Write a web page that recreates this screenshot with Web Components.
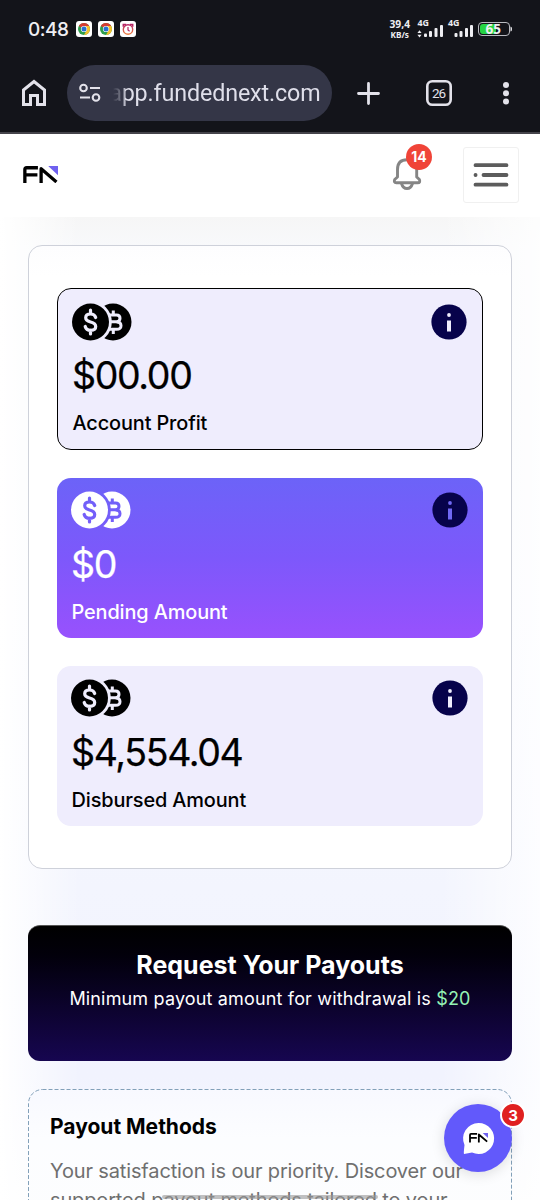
<!DOCTYPE html>
<html lang="en">
<head>
<meta charset="utf-8">
<title>Payouts</title>
<style>
html,body{margin:0;height:1200px;overflow:hidden}
body{font-family:Inter,"Liberation Sans",sans-serif;color:#000;background:#fff}
</style>
</head>
<body>
<payout-app></payout-app>
<script>
const define=(name,html)=>customElements.define(name,class extends HTMLElement{
  constructor(){super();const t=document.createElement('template');t.innerHTML=html;
    this.attachShadow({mode:'open'}).appendChild(t.content.cloneNode(true));}
});

define('chrome-icon',`<style>:host{display:block;width:16px;height:16px}svg{display:block}</style>
<svg width="16" height="16" viewBox="0 0 16 16"><rect width="16" height="16" rx="3" fill="#fff"/>
<circle cx="8" cy="8" r="6" fill="#2f9e4c"/><path d="M8 8L2.8 5A6 6 0 0 1 13.2 5z" fill="#d63c31"/><path d="M8 5H13.2A6 6 0 0 1 8 14L10.6 9.5z" fill="#f6c12c"/>
<circle cx="8" cy="8" r="3.1" fill="#fff"/><circle cx="8" cy="8" r="2.5" fill="#2970cf"/></svg>`);

define('alarm-icon',`<style>:host{display:block;width:16px;height:16px}svg{display:block}</style>
<svg width="16" height="16" viewBox="0 0 16 16"><defs><linearGradient id="g" x2="0" y2="1"><stop stop-color="#b52464"/><stop offset="1" stop-color="#f08040"/></linearGradient></defs><rect width="16" height="16" rx="3" fill="#fff"/>
<path d="M3.4 5.8V3.5h2.8M9.8 3.5h2.8v2.3" fill="none" stroke="#b52464" stroke-width="1.7"/><circle cx="8" cy="8.5" r="4.7" fill="none" stroke="url(#g)" stroke-width="1.4"/><path d="M8 6v3l1.6 1.2" fill="none" stroke="#b52464" stroke-width="1.2"/></svg>`);

define('status-bar',`<style>
:host{display:flex;height:58px;align-items:center;padding:0 28px;box-sizing:border-box;color:#eeeef2;font-family:"Noto Sans",sans-serif}
.time{font-size:19px;font-weight:500;letter-spacing:-.5px;width:48px;line-height:22px;font-family:Inter,sans-serif;padding-top:1px}
.apps{display:flex;gap:6px}
.right{margin-left:auto;display:flex;align-items:flex-start;height:24px}
svg{display:block}
</style>
<div class="time">0:48</div><div class="apps"><chrome-icon></chrome-icon><chrome-icon></chrome-icon><alarm-icon></alarm-icon></div>
<div class="right">
<svg width="126" height="24" viewBox="386 17 126 24" fill="#eeeef2" font-family="Noto Sans,sans-serif" font-weight="700">
<text x="389.500" y="27.500" font-size="10" textLength="20.500" lengthAdjust="spacingAndGlyphs">39,4</text><text x="390.500" y="37.700" font-size="8.800" textLength="18.500" lengthAdjust="spacingAndGlyphs">KB/s</text>
<text x="417.500" y="26.300" font-size="8.500" textLength="11.500" lengthAdjust="spacingAndGlyphs">4G</text><text x="447.900" y="26.300" font-size="8.500" textLength="11.500" lengthAdjust="spacingAndGlyphs">4G</text>
<path d="M417.400 33l2.100-2.700 2.100 2.700zM417.400 34.800h4.200l-2.100 2.600z"/>
<g><rect x="424" y="33.500" width="3" height="3.500" rx="1"/><rect x="429" y="31" width="3" height="6" rx="1"/><rect x="434.500" y="28" width="3" height="9" rx="1"/><rect x="440" y="25" width="3" height="12" rx="1"/></g>
<g><rect x="454.500" y="33" width="3" height="4" rx="1"/><rect x="459.500" y="31" width="3" height="6" rx="1"/><rect x="465" y="28" width="3" height="9" rx="1"/><rect x="470" y="25" width="3" height="12" rx="1"/></g>
<rect x="478.500" y="22.500" width="31" height="13" rx="3.5" fill="none" stroke="#b9bac0"/><path d="M483 24h13v10h-13q-3 0-3-3v-4q0-3 3-3z" fill="#25d443"/><path d="M510.500 26.500q1.500 0 1.500 2.500t-1.500 2.500z"/>
<text x="485.500" y="33.800" font-size="13.500" textLength="15.500" lengthAdjust="spacingAndGlyphs">65</text></svg></div>`);

define('browser-bar',`<style>
:host{display:flex;height:76px;box-sizing:border-box;border-bottom:2px solid #45444b;align-items:flex-start;padding:7px 0 0 21px;color:#e3e2ea;font-family:Roboto,sans-serif}
svg{display:block}
.home{width:46px;padding-top:13px}
.url{display:flex;align-items:center;width:265px;height:56px;border-radius:28px;background:#343647;box-sizing:border-box;padding-left:12px;overflow:hidden}
.host{flex:none;display:flex;justify-content:flex-end;margin-left:9px;width:210.500px;font-size:23.300px;line-height:30px;letter-spacing:-.14px;white-space:nowrap;color:#dfdfea;-webkit-mask:linear-gradient(90deg,#0000 3px,#0008 14px,#000 15px);mask:linear-gradient(90deg,#0000 3px,#0008 14px,#000 15px)}
</style>
<div class="home"><svg width="26" height="30" viewBox="0 0 26 30"><path d="M2.500 12L13 3.500 23.500 12V26.500h-7V17.500h-7v9h-7z" fill="none" stroke="currentColor" stroke-width="3"/></svg></div>
<div class="url"><svg width="22" height="20" viewBox="0 0 22 20" fill="none" stroke="currentColor" stroke-width="2.100"><circle cx="4.500" cy="5" r="3.300"/><path d="M11 5h10M1 14.500h10"/><circle cx="17" cy="14.500" r="3.300"/></svg><span class="host">app.fundednext.com</span></div>
<svg width="208" height="56" viewBox="332 65 208 56"><path d="M368.500 83.500v20M358.500 93.500h20" stroke="currentColor" stroke-width="2.800" stroke-linecap="round"/><rect x="427.300" y="81.300" width="23.400" height="23.400" rx="5" fill="none" stroke="currentColor" stroke-width="2.600"/><text x="439" y="98" text-anchor="middle" font-size="13.500" fill="currentColor" textLength="14">26</text><g fill="currentColor"><circle cx="506" cy="85" r="3"/><circle cx="506" cy="93.300" r="3"/><circle cx="506" cy="101.500" r="3"/></g></svg>`);

define('fn-logo',`<style>:host{display:block}svg{display:block;width:100%}</style>
<svg viewBox="0 0 34 17"><path d="M1.800 17V3.500Q1.800 1.700 3.600 1.700H14.500M2 8.600H14M17.600 17V2.600L32.500 15.500" fill="none" stroke="#000" stroke-width="3.200" stroke-linejoin="round"/><path d="M24.500 0H34V9z" fill="#6f61ef"/></svg>`);

define('count-badge',`<style>:host{display:flex;align-items:center;justify-content:center;border-radius:50%;color:#fff;font-weight:700;box-sizing:border-box}</style><slot></slot>`);

define('site-header',`<style>
:host{display:flex;align-items:flex-start;height:83px;box-sizing:border-box;background:#fff;padding:13px 21px 0 23px}
fn-logo{width:35px;margin-top:18.500px}
.bell{position:relative;margin-left:auto;width:30px;height:34px;margin-top:9px}
.bell count-badge{position:absolute;left:14px;top:-12.500px;width:26px;height:26px;background:#f04438;font-size:14px}
svg{display:block}
.menu{margin-left:41px;width:56px;height:56px;box-sizing:border-box;border:1px solid #f0f0f0;border-radius:3px;display:grid;place-items:center}
.menu svg{margin-top:-1px}
</style><fn-logo></fn-logo>
<div class="bell"><svg width="30" height="34" viewBox="0 0 30 34" fill="none" stroke="#858585" stroke-width="2.900" stroke-linejoin="round"><path d="M5.500 21V13.500C5.500 7 9 3.700 15 3.700s9.700 3.300 9.700 9.800V21l2.700 2.500q1.200 3.300-1.700 3.300H4.300Q1.500 26.800 2.700 23.500z"/><path d="M9.500 27.500q1.500 5 5.500 5t5.500-5"/></svg><count-badge>14</count-badge></div>
<div class="menu"><svg width="36" height="26" viewBox="0 0 36 26" stroke="#5c5c5c" stroke-width="3.800" stroke-linecap="round"><path d="M2.500 3.200h31M10.500 13h23M2.500 13h.1M2.500 22.700h31"/></svg></div>`);

define('coin-pair',`<style>:host{display:block;width:60px;height:38px}svg{display:block}</style>
<svg width="60" height="38" viewBox="0 0 60 38"><defs><mask id="a" maskUnits="userSpaceOnUse" x="0" y="0" width="60" height="38"><circle cx="41" cy="19" r="18.500" fill="#fff"/><circle cx="18.500" cy="19" r="21.300" fill="#000"/><path d="M37 12h7.500q3.500 0 3.500 3.300t-3.500 3.500H37M44.500 19q4.500 0 4.500 3.700t-4.500 3.600H37M41.300 7.500V12M41.300 26v5" fill="none" stroke="#000" stroke-width="3"/></mask>
<mask id="b" maskUnits="userSpaceOnUse" x="0" y="0" width="60" height="38"><circle cx="18.500" cy="19" r="18.500" fill="#fff"/><path d="M23.700 14.500Q22.800 11 18.500 11Q13.700 11 13.700 14.800Q13.700 17.700 18.500 19Q23.700 20.300 23.700 23.500Q23.700 27.300 18.700 27.300Q14.200 27.300 13.200 23.500M18.500 7v4M18.500 27v4" fill="none" stroke="#000" stroke-width="3.200" stroke-linecap="round"/></mask></defs>
<rect width="60" height="38" fill="currentColor" mask="url(#a)"/><rect width="60" height="38" fill="currentColor" mask="url(#b)"/></svg>`);

define('info-dot',`<style>:host{display:block;width:36px;height:36px}svg{display:block}</style>
<svg width="36" height="36" viewBox="0 0 36 36"><circle cx="18" cy="18" r="17.600" fill="#07034b"/><circle cx="18" cy="11" r="1.900" fill="var(--info,#efedfd)"/><path d="M16 16.500h4v11h-4z" fill="var(--info,#efedfd)"/></svg>`);

define('stat-card',`<style>
:host{display:block;height:160px;box-sizing:border-box;border-radius:14px;background:#efedfd;padding:13px 15px 13px 14px;color:#000}
:host([outlined]){height:162px;border:1px solid #000;padding:14px 15px 13px 14px}
:host([outlined]) .amount{margin-top:12px}
:host([outlined]) .label{margin-top:12px}
:host([accent]){color:#fff;background:linear-gradient(#6c63f8,#7d58fb 50%,#9851fd);--info:#7068f4}
.top{display:flex;justify-content:space-between}
info-dot{margin-top:1px}
.amount{font-size:37.500px;line-height:46px;margin-top:13px;letter-spacing:-1.350px;-webkit-text-stroke:.25px currentColor}
.label{font-size:19.900px;line-height:24px;margin-top:12px;font-weight:500;letter-spacing:-.12px;padding-left:.5px}
</style><div class="top"><coin-pair></coin-pair><info-dot></info-dot></div><div class="amount"><slot name="amount"></slot></div><div class="label"><slot></slot></div>`);

define('stats-panel',`<style>:host{display:flex;flex-direction:column;gap:28px;box-sizing:border-box;height:624px;padding:42px 28px;border:1px solid #ced1da;border-radius:14px;background:linear-gradient(#fdfdfe,#fff 30px)}</style><slot></slot>`);

define('payout-banner',`<style>
:host{display:block;height:136px;box-sizing:border-box;border-radius:12px;background:linear-gradient(#000,#02000b 22%,#10043a 75%,#160650);color:#fff;text-align:center;padding-top:24px;border-top:1px solid #555}
h2{margin:0;font-size:25px;line-height:30px;font-weight:700}
p{margin:6px 0 0;font-size:18px;line-height:26px;letter-spacing:.16px}
b{font-weight:400;color:#95f3b5}
</style><h2>Request Your Payouts</h2><p>Minimum payout amount for withdrawal is <b>$20</b></p>`);

define('payout-methods',`<style>
:host{display:block;position:relative;height:200px;box-sizing:border-box;padding:24px 22px;border-radius:14px;background:linear-gradient(#f8f9ff,#fcfdff 50px,#fdfdfd)}
.frame{position:absolute;inset:0;width:100%;height:100%}
h3{margin:0;font-size:21px;line-height:28px;font-weight:700}
p{margin:16px 0 0;font-size:20px;line-height:29px;letter-spacing:-.14px;color:#6f6f6f;white-space:nowrap}
</style><svg class="frame"><rect x=".5" y=".5" width="483" height="220" rx="14" fill="none" stroke="#82a0b9" stroke-dasharray="4 2"/></svg><h3>Payout Methods</h3><p>Your satisfaction is our priority. Discover our<br>supported payout methods tailored to your</p>`);

define('chat-button',`<style>
:host{display:grid;place-items:center;width:68px;height:68px;border-radius:50%;background:#6259fb;box-shadow:0 2px 14px #0002}
.bubble{position:relative;width:31px;height:31px}
.bubble>svg{display:block;overflow:visible}
fn-logo{position:absolute;left:6px;top:10.500px;width:19px}
count-badge{position:absolute;left:56px;top:-2px;width:26px;height:26px;border:2px solid #fff;background:#e02020;font-size:15px}
</style><div class="bubble"><svg width="31" height="31" viewBox="0 0 31 31"><path d="M15.500 0a15.500 15.500 0 1 1-6.500 29.500L1 31Q.5 30.500 1.500 22A15.500 15.500 0 0 1 15.500 0z" fill="#fff"/></svg><fn-logo></fn-logo></div><count-badge>3</count-badge>`);

define('payout-app',`<style>
:host{display:flex;flex-direction:column;position:relative;width:540px;height:1200px;overflow:hidden}
.chrome{background:#13141a;height:134px;flex:none}
main{display:flex;flex-direction:column;padding:28px 28px 0;height:983px;box-sizing:border-box;background:linear-gradient(90deg,#fff,#fff0 80px,#fff0 440px,#ffffffd0),linear-gradient(#f6f6f6,#f8f9fb 30px,#f8f9fe 400px,#f3f5fe 670px,#f1f3fe 860px,#fbfbfd)}
payout-banner{margin-top:56px}payout-methods{margin-top:28px}
stats-panel,payout-banner,payout-methods,site-header{flex:none}
chat-button{position:absolute;left:444px;top:1104px}
.bar{position:absolute;left:162px;top:1195px;width:216px;height:4px;border-radius:2px;background:#98989899}
</style><div class="chrome"><status-bar></status-bar><browser-bar></browser-bar></div><site-header></site-header>
<main><stats-panel>
<stat-card outlined><span slot="amount">$00.00</span>Account Profit</stat-card>
<stat-card accent><span slot="amount">$0</span>Pending Amount</stat-card>
<stat-card><span slot="amount">$4,554.04</span>Disbursed Amount</stat-card>
</stats-panel><payout-banner></payout-banner><payout-methods></payout-methods></main>
<chat-button></chat-button><div class="bar"></div>`);
</script>
</body>
</html>
